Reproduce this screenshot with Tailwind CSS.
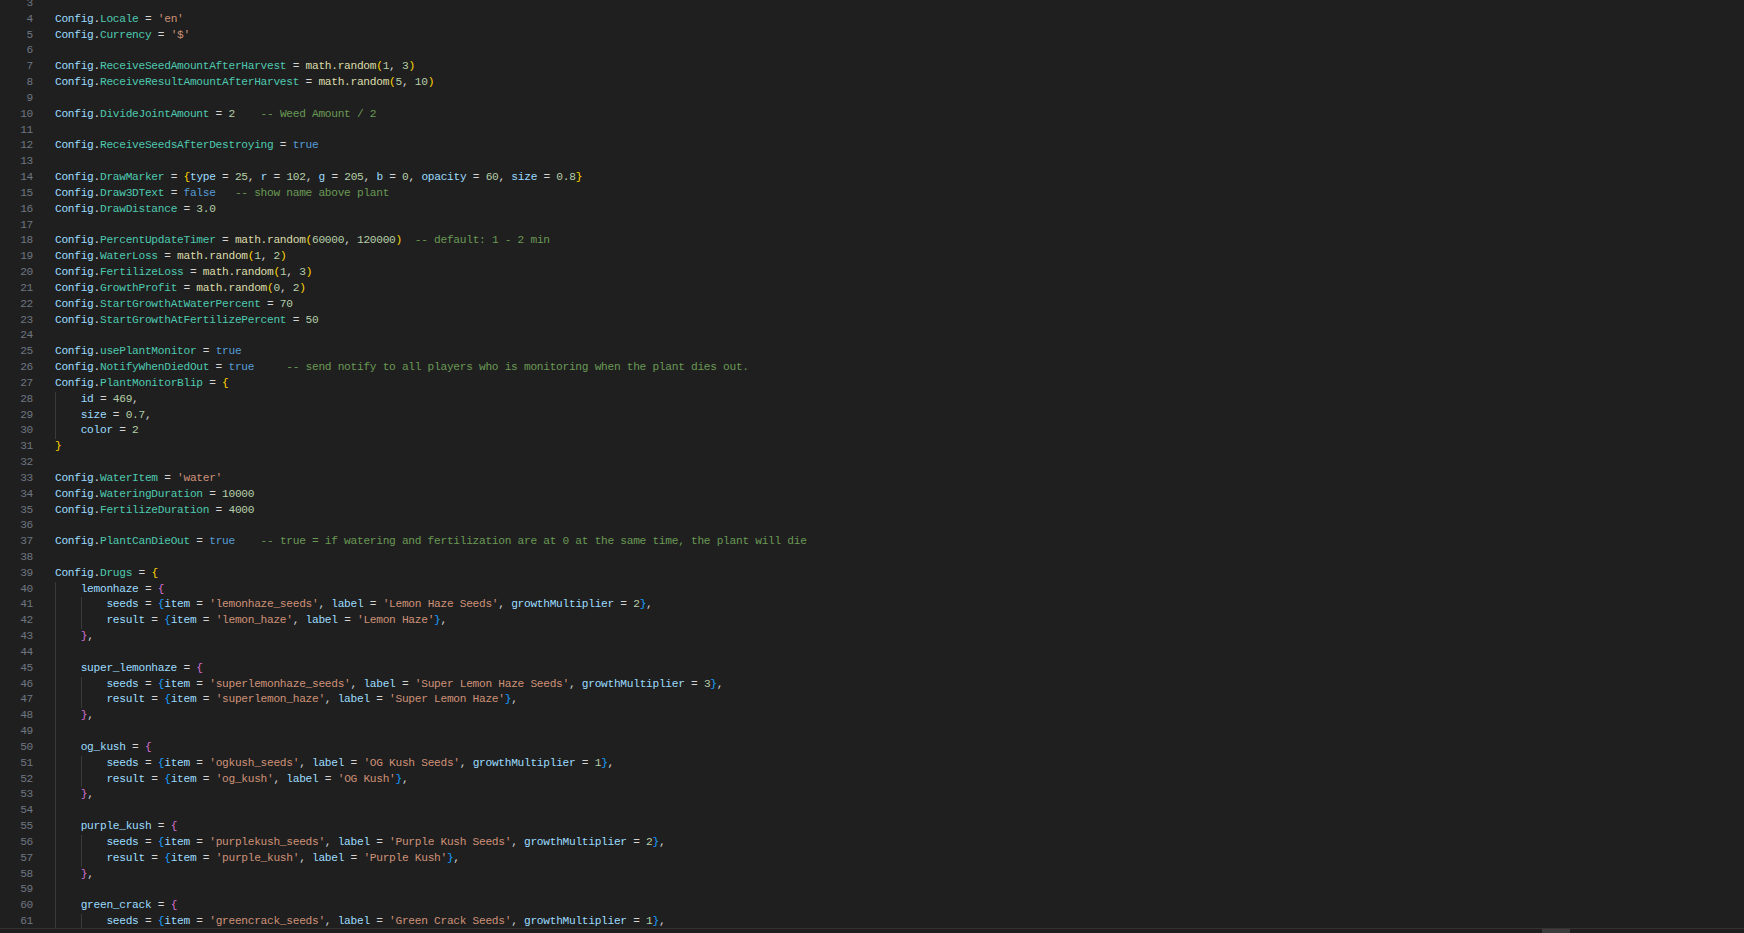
<!DOCTYPE html>
<html lang="en">
<head>
<meta charset="UTF-8" />
<title>config.lua</title>
<script src="https://cdn.jsdelivr.net/npm/@tailwindcss/browser@4"></script>
</head>
<body class="bg-[#1f1f1f] h-[933px] w-[1744px] overflow-hidden flex flex-col font-['Liberation_Mono',monospace] text-[11.2px] tracking-[-0.29px] leading-[15.84px] text-[#d4d4d4]">
<main class="flex-1 overflow-hidden">
<div class="-mt-[4px] [&>div]:flex [&>div]:h-[15.84px] [&>div>i]:w-[33px] [&>div>i]:mr-[22px] [&>div>i]:text-right [&>div>i]:not-italic [&>div>i]:text-[#6e7681] [&>div>code]:block [&>div>code]:whitespace-pre [&>div>code]:font-[inherit] [&_u]:no-underline [&_u]:inline-block [&_u]:align-top [&_u]:h-[15.84px] [&_u]:w-[25.7px] [&_u]:border-l [&_u]:border-[#3a3a3a]">
<div><i>3</i><code></code></div>
<div><i>4</i><code><span class="text-[#9cdcfe]">Config</span>.<span class="text-[#4ec9b0]">Locale</span> = <span class="text-[#ce9178]">'en'</span></code></div>
<div><i>5</i><code><span class="text-[#9cdcfe]">Config</span>.<span class="text-[#4ec9b0]">Currency</span> = <span class="text-[#ce9178]">'$'</span></code></div>
<div><i>6</i><code></code></div>
<div><i>7</i><code><span class="text-[#9cdcfe]">Config</span>.<span class="text-[#4ec9b0]">ReceiveSeedAmountAfterHarvest</span> = <span class="text-[#dcdcaa]">math.random</span><span class="text-[#ffd700]">(</span><span class="text-[#b5cea8]">1</span>, <span class="text-[#b5cea8]">3</span><span class="text-[#ffd700]">)</span></code></div>
<div><i>8</i><code><span class="text-[#9cdcfe]">Config</span>.<span class="text-[#4ec9b0]">ReceiveResultAmountAfterHarvest</span> = <span class="text-[#dcdcaa]">math.random</span><span class="text-[#ffd700]">(</span><span class="text-[#b5cea8]">5</span>, <span class="text-[#b5cea8]">10</span><span class="text-[#ffd700]">)</span></code></div>
<div><i>9</i><code></code></div>
<div><i>10</i><code><span class="text-[#9cdcfe]">Config</span>.<span class="text-[#4ec9b0]">DivideJointAmount</span> = <span class="text-[#b5cea8]">2</span>    <span class="text-[#6a9955]">-- Weed Amount / 2</span></code></div>
<div><i>11</i><code></code></div>
<div><i>12</i><code><span class="text-[#9cdcfe]">Config</span>.<span class="text-[#4ec9b0]">ReceiveSeedsAfterDestroying</span> = <span class="text-[#569cd6]">true</span></code></div>
<div><i>13</i><code></code></div>
<div><i>14</i><code><span class="text-[#9cdcfe]">Config</span>.<span class="text-[#4ec9b0]">DrawMarker</span> = <span class="text-[#ffd700]">{</span><span class="text-[#9cdcfe]">type</span> = <span class="text-[#b5cea8]">25</span>, <span class="text-[#9cdcfe]">r</span> = <span class="text-[#b5cea8]">102</span>, <span class="text-[#9cdcfe]">g</span> = <span class="text-[#b5cea8]">205</span>, <span class="text-[#9cdcfe]">b</span> = <span class="text-[#b5cea8]">0</span>, <span class="text-[#9cdcfe]">opacity</span> = <span class="text-[#b5cea8]">60</span>, <span class="text-[#9cdcfe]">size</span> = <span class="text-[#b5cea8]">0.8</span><span class="text-[#ffd700]">}</span></code></div>
<div><i>15</i><code><span class="text-[#9cdcfe]">Config</span>.<span class="text-[#4ec9b0]">Draw3DText</span> = <span class="text-[#569cd6]">false</span>   <span class="text-[#6a9955]">-- show name above plant</span></code></div>
<div><i>16</i><code><span class="text-[#9cdcfe]">Config</span>.<span class="text-[#4ec9b0]">DrawDistance</span> = <span class="text-[#b5cea8]">3.0</span></code></div>
<div><i>17</i><code></code></div>
<div><i>18</i><code><span class="text-[#9cdcfe]">Config</span>.<span class="text-[#4ec9b0]">PercentUpdateTimer</span> = <span class="text-[#dcdcaa]">math.random</span><span class="text-[#ffd700]">(</span><span class="text-[#b5cea8]">60000</span>, <span class="text-[#b5cea8]">120000</span><span class="text-[#ffd700]">)</span>  <span class="text-[#6a9955]">-- default: 1 - 2 min</span></code></div>
<div><i>19</i><code><span class="text-[#9cdcfe]">Config</span>.<span class="text-[#4ec9b0]">WaterLoss</span> = <span class="text-[#dcdcaa]">math.random</span><span class="text-[#ffd700]">(</span><span class="text-[#b5cea8]">1</span>, <span class="text-[#b5cea8]">2</span><span class="text-[#ffd700]">)</span></code></div>
<div><i>20</i><code><span class="text-[#9cdcfe]">Config</span>.<span class="text-[#4ec9b0]">FertilizeLoss</span> = <span class="text-[#dcdcaa]">math.random</span><span class="text-[#ffd700]">(</span><span class="text-[#b5cea8]">1</span>, <span class="text-[#b5cea8]">3</span><span class="text-[#ffd700]">)</span></code></div>
<div><i>21</i><code><span class="text-[#9cdcfe]">Config</span>.<span class="text-[#4ec9b0]">GrowthProfit</span> = <span class="text-[#dcdcaa]">math.random</span><span class="text-[#ffd700]">(</span><span class="text-[#b5cea8]">0</span>, <span class="text-[#b5cea8]">2</span><span class="text-[#ffd700]">)</span></code></div>
<div><i>22</i><code><span class="text-[#9cdcfe]">Config</span>.<span class="text-[#4ec9b0]">StartGrowthAtWaterPercent</span> = <span class="text-[#b5cea8]">70</span></code></div>
<div><i>23</i><code><span class="text-[#9cdcfe]">Config</span>.<span class="text-[#4ec9b0]">StartGrowthAtFertilizePercent</span> = <span class="text-[#b5cea8]">50</span></code></div>
<div><i>24</i><code></code></div>
<div><i>25</i><code><span class="text-[#9cdcfe]">Config</span>.<span class="text-[#4ec9b0]">usePlantMonitor</span> = <span class="text-[#569cd6]">true</span></code></div>
<div><i>26</i><code><span class="text-[#9cdcfe]">Config</span>.<span class="text-[#4ec9b0]">NotifyWhenDiedOut</span> = <span class="text-[#569cd6]">true</span>     <span class="text-[#6a9955]">-- send notify to all players who is monitoring when the plant dies out.</span></code></div>
<div><i>27</i><code><span class="text-[#9cdcfe]">Config</span>.<span class="text-[#4ec9b0]">PlantMonitorBlip</span> = <span class="text-[#ffd700]">{</span></code></div>
<div><i>28</i><code><u></u><span class="text-[#9cdcfe]">id</span> = <span class="text-[#b5cea8]">469</span>,</code></div>
<div><i>29</i><code><u></u><span class="text-[#9cdcfe]">size</span> = <span class="text-[#b5cea8]">0.7</span>,</code></div>
<div><i>30</i><code><u></u><span class="text-[#9cdcfe]">color</span> = <span class="text-[#b5cea8]">2</span></code></div>
<div><i>31</i><code><span class="text-[#ffd700]">}</span></code></div>
<div><i>32</i><code></code></div>
<div><i>33</i><code><span class="text-[#9cdcfe]">Config</span>.<span class="text-[#4ec9b0]">WaterItem</span> = <span class="text-[#ce9178]">'water'</span></code></div>
<div><i>34</i><code><span class="text-[#9cdcfe]">Config</span>.<span class="text-[#4ec9b0]">WateringDuration</span> = <span class="text-[#b5cea8]">10000</span></code></div>
<div><i>35</i><code><span class="text-[#9cdcfe]">Config</span>.<span class="text-[#4ec9b0]">FertilizeDuration</span> = <span class="text-[#b5cea8]">4000</span></code></div>
<div><i>36</i><code></code></div>
<div><i>37</i><code><span class="text-[#9cdcfe]">Config</span>.<span class="text-[#4ec9b0]">PlantCanDieOut</span> = <span class="text-[#569cd6]">true</span>    <span class="text-[#6a9955]">-- true = if watering and fertilization are at 0 at the same time, the plant will die</span></code></div>
<div><i>38</i><code></code></div>
<div><i>39</i><code><span class="text-[#9cdcfe]">Config</span>.<span class="text-[#4ec9b0]">Drugs</span> = <span class="text-[#ffd700]">{</span></code></div>
<div><i>40</i><code><u></u><span class="text-[#9cdcfe]">lemonhaze</span> = <span class="text-[#da70d6]">{</span></code></div>
<div><i>41</i><code><u></u><u></u><span class="text-[#9cdcfe]">seeds</span> = <span class="text-[#179fff]">{</span><span class="text-[#9cdcfe]">item</span> = <span class="text-[#ce9178]">'lemonhaze_seeds'</span>, <span class="text-[#9cdcfe]">label</span> = <span class="text-[#ce9178]">'Lemon Haze Seeds'</span>, <span class="text-[#9cdcfe]">growthMultiplier</span> = <span class="text-[#b5cea8]">2</span><span class="text-[#179fff]">}</span>,</code></div>
<div><i>42</i><code><u></u><u></u><span class="text-[#9cdcfe]">result</span> = <span class="text-[#179fff]">{</span><span class="text-[#9cdcfe]">item</span> = <span class="text-[#ce9178]">'lemon_haze'</span>, <span class="text-[#9cdcfe]">label</span> = <span class="text-[#ce9178]">'Lemon Haze'</span><span class="text-[#179fff]">}</span>,</code></div>
<div><i>43</i><code><u></u><span class="text-[#da70d6]">}</span>,</code></div>
<div><i>44</i><code><u></u></code></div>
<div><i>45</i><code><u></u><span class="text-[#9cdcfe]">super_lemonhaze</span> = <span class="text-[#da70d6]">{</span></code></div>
<div><i>46</i><code><u></u><u></u><span class="text-[#9cdcfe]">seeds</span> = <span class="text-[#179fff]">{</span><span class="text-[#9cdcfe]">item</span> = <span class="text-[#ce9178]">'superlemonhaze_seeds'</span>, <span class="text-[#9cdcfe]">label</span> = <span class="text-[#ce9178]">'Super Lemon Haze Seeds'</span>, <span class="text-[#9cdcfe]">growthMultiplier</span> = <span class="text-[#b5cea8]">3</span><span class="text-[#179fff]">}</span>,</code></div>
<div><i>47</i><code><u></u><u></u><span class="text-[#9cdcfe]">result</span> = <span class="text-[#179fff]">{</span><span class="text-[#9cdcfe]">item</span> = <span class="text-[#ce9178]">'superlemon_haze'</span>, <span class="text-[#9cdcfe]">label</span> = <span class="text-[#ce9178]">'Super Lemon Haze'</span><span class="text-[#179fff]">}</span>,</code></div>
<div><i>48</i><code><u></u><span class="text-[#da70d6]">}</span>,</code></div>
<div><i>49</i><code><u></u></code></div>
<div><i>50</i><code><u></u><span class="text-[#9cdcfe]">og_kush</span> = <span class="text-[#da70d6]">{</span></code></div>
<div><i>51</i><code><u></u><u></u><span class="text-[#9cdcfe]">seeds</span> = <span class="text-[#179fff]">{</span><span class="text-[#9cdcfe]">item</span> = <span class="text-[#ce9178]">'ogkush_seeds'</span>, <span class="text-[#9cdcfe]">label</span> = <span class="text-[#ce9178]">'OG Kush Seeds'</span>, <span class="text-[#9cdcfe]">growthMultiplier</span> = <span class="text-[#b5cea8]">1</span><span class="text-[#179fff]">}</span>,</code></div>
<div><i>52</i><code><u></u><u></u><span class="text-[#9cdcfe]">result</span> = <span class="text-[#179fff]">{</span><span class="text-[#9cdcfe]">item</span> = <span class="text-[#ce9178]">'og_kush'</span>, <span class="text-[#9cdcfe]">label</span> = <span class="text-[#ce9178]">'OG Kush'</span><span class="text-[#179fff]">}</span>,</code></div>
<div><i>53</i><code><u></u><span class="text-[#da70d6]">}</span>,</code></div>
<div><i>54</i><code><u></u></code></div>
<div><i>55</i><code><u></u><span class="text-[#9cdcfe]">purple_kush</span> = <span class="text-[#da70d6]">{</span></code></div>
<div><i>56</i><code><u></u><u></u><span class="text-[#9cdcfe]">seeds</span> = <span class="text-[#179fff]">{</span><span class="text-[#9cdcfe]">item</span> = <span class="text-[#ce9178]">'purplekush_seeds'</span>, <span class="text-[#9cdcfe]">label</span> = <span class="text-[#ce9178]">'Purple Kush Seeds'</span>, <span class="text-[#9cdcfe]">growthMultiplier</span> = <span class="text-[#b5cea8]">2</span><span class="text-[#179fff]">}</span>,</code></div>
<div><i>57</i><code><u></u><u></u><span class="text-[#9cdcfe]">result</span> = <span class="text-[#179fff]">{</span><span class="text-[#9cdcfe]">item</span> = <span class="text-[#ce9178]">'purple_kush'</span>, <span class="text-[#9cdcfe]">label</span> = <span class="text-[#ce9178]">'Purple Kush'</span><span class="text-[#179fff]">}</span>,</code></div>
<div><i>58</i><code><u></u><span class="text-[#da70d6]">}</span>,</code></div>
<div><i>59</i><code><u></u></code></div>
<div><i>60</i><code><u></u><span class="text-[#9cdcfe]">green_crack</span> = <span class="text-[#da70d6]">{</span></code></div>
<div><i>61</i><code><u></u><u></u><span class="text-[#9cdcfe]">seeds</span> = <span class="text-[#179fff]">{</span><span class="text-[#9cdcfe]">item</span> = <span class="text-[#ce9178]">'greencrack_seeds'</span>, <span class="text-[#9cdcfe]">label</span> = <span class="text-[#ce9178]">'Green Crack Seeds'</span>, <span class="text-[#9cdcfe]">growthMultiplier</span> = <span class="text-[#b5cea8]">1</span><span class="text-[#179fff]">}</span>,</code></div>
</div>
</main>
<footer class="h-[5px] shrink-0 border-t border-[#333333] flex justify-end pr-[174px]">
<div class="w-[28px] h-full bg-[#3c3c3c]"></div>
</footer>
</body>
</html>
